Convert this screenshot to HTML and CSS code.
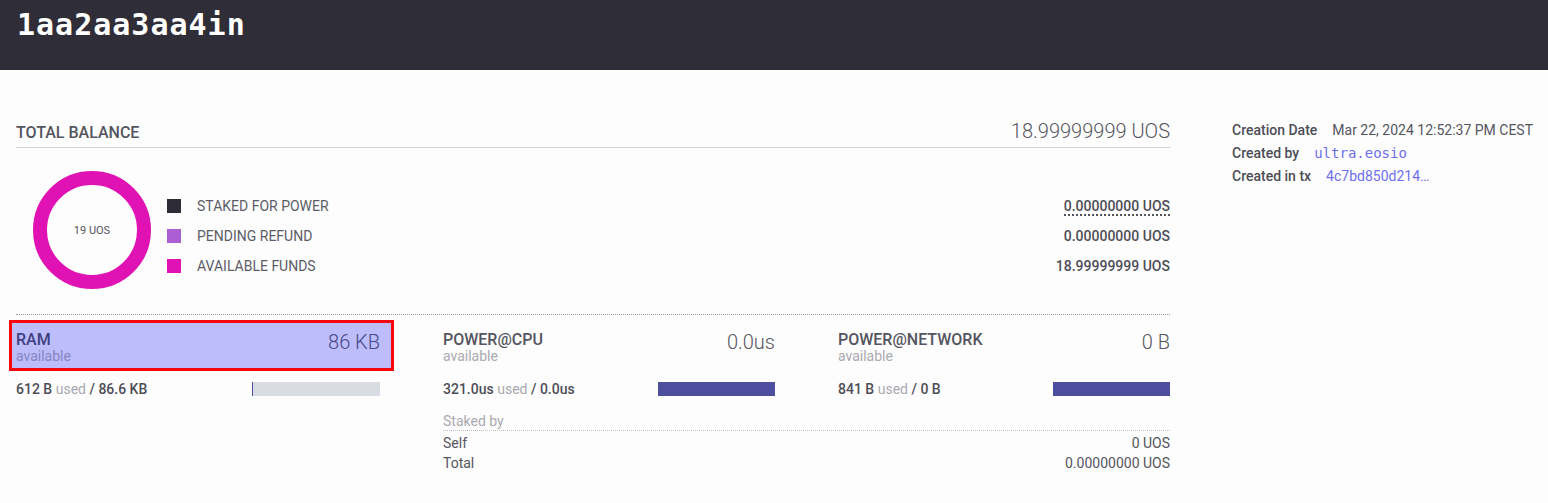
FILE: index.html
```html
<!DOCTYPE html>
<html lang="en">
<head>
<meta charset="utf-8">
<title>1aa2aa3aa4in</title>
<link rel="stylesheet" href="styles.css">
</head>
<body>
<header class="topbar">
  <h1 class="account-name">1aa2aa3aa4in</h1>
</header>
<main class="page">
  <section class="balance">
    <div class="balance-head">
      <h2 class="balance-title">TOTAL BALANCE</h2>
      <span class="balance-total">18.99999999 UOS</span>
    </div>
    <div class="overview">
      <div class="donut">
        <svg class="donut-svg" viewBox="0 0 118 118" width="118" height="118">
          <circle cx="59" cy="59" r="52" fill="none" stroke="#e112b4" stroke-width="14"/>
        </svg>
        <span class="donut-label">19 UOS</span>
      </div>
      <ul class="legend">
        <li class="legend-row"><i class="swatch swatch-staked"></i><span class="legend-label">STAKED FOR POWER</span><span class="legend-value"><span class="dotted">0.00000000 UOS</span></span></li>
        <li class="legend-row"><i class="swatch swatch-refund"></i><span class="legend-label">PENDING REFUND</span><span class="legend-value">0.00000000 UOS</span></li>
        <li class="legend-row"><i class="swatch swatch-funds"></i><span class="legend-label">AVAILABLE FUNDS</span><span class="legend-value">18.99999999 UOS</span></li>
      </ul>
    </div>
    <div class="resources">
      <div class="res">
        <div class="res-head hl">
          <div class="res-names">
            <div class="res-title">RAM</div>
            <div class="res-sub">available</div>
          </div>
          <div class="res-amount">86 KB</div>
        </div>
        <div class="res-usage">
          <span class="usage-text"><b>612 B</b> <span class="muted">used</span> <b>/ 86.6 KB</b></span>
          <span class="bar"><span class="bar-fill" style="width:0.7%"></span></span>
        </div>
      </div>
      <div class="res">
        <div class="res-head">
          <div class="res-names">
            <div class="res-title">POWER@CPU</div>
            <div class="res-sub">available</div>
          </div>
          <div class="res-amount">0.0us</div>
        </div>
        <div class="res-usage">
          <span class="usage-text"><b>321.0us</b> <span class="muted">used</span> <b>/ 0.0us</b></span>
          <span class="bar"><span class="bar-fill" style="width:100%"></span></span>
        </div>
      </div>
      <div class="res">
        <div class="res-head">
          <div class="res-names">
            <div class="res-title">POWER@NETWORK</div>
            <div class="res-sub">available</div>
          </div>
          <div class="res-amount">0 B</div>
        </div>
        <div class="res-usage">
          <span class="usage-text"><b>841 B</b> <span class="muted">used</span> <b>/ 0 B</b></span>
          <span class="bar"><span class="bar-fill" style="width:100%"></span></span>
        </div>
      </div>
      <div class="staked">
        <div class="staked-head">Staked by</div>
        <div class="staked-row"><span>Self</span><span>0 UOS</span></div>
        <div class="staked-row"><span>Total</span><span>0.00000000 UOS</span></div>
      </div>
    </div>
  </section>
  <aside class="meta">
    <div class="meta-row"><span class="meta-label">Creation Date</span><span class="meta-value">Mar 22, 2024 12:52:37 PM CEST</span></div>
    <div class="meta-row"><span class="meta-label">Created by</span><a class="meta-link mono" href="#">ultra.eosio</a></div>
    <div class="meta-row"><span class="meta-label">Created in tx</span><a class="meta-link" href="#">4c7bd850d214…</a></div>
  </aside>
</main>
</body>
</html>
```
FILE: styles.css
```css
* { box-sizing: border-box; }

html, body {
  margin: 0;
  padding: 0;
  background: #fdfdfd;
  font-family: Roboto, "Noto Sans", "Liberation Sans", sans-serif;
  color: #55555f;
  font-size: 14px;
}

.topbar {
  height: 70px;
  background: #2f2d37;
  padding: 4px 0 0 17px;
}

.account-name {
  margin: 0;
  font-family: "DejaVu Sans Mono", "Liberation Mono", monospace;
  font-weight: bold;
  font-size: 30px;
  letter-spacing: 1px;
  line-height: 41px;
  color: #ffffff;
}

.page {
  display: flex;
  align-items: flex-start;
  gap: 62px;
  padding: 49px 16px 0 16px;
}

.balance {
  width: 1154px;
  flex: none;
}

.balance-head {
  display: flex;
  justify-content: space-between;
  align-items: baseline;
  padding-bottom: 4px;
  border-bottom: 1px solid #d4d4dc;
}

.balance-title {
  margin: 0;
  font-size: 16px;
  font-weight: 500;
  line-height: 20px;
  color: #55555f;
}

.balance-total {
  font-size: 20px;
  font-weight: 300;
  line-height: 24px;
  color: #55555f;
}

.overview {
  display: flex;
  align-items: flex-start;
  padding: 23px 0 25px 0;
  border-bottom: 1px dotted #9a9aa2;
}

.donut {
  position: relative;
  width: 118px;
  height: 118px;
  margin-left: 17px;
  flex: none;
}

.donut-svg { display: block; }

.donut-label {
  position: absolute;
  inset: 0;
  display: flex;
  align-items: center;
  justify-content: center;
  font-size: 11px;
  color: #55555f;
}

.legend {
  list-style: none;
  margin: 20px 0 0 16px;
  padding: 0;
  flex: 1;
}

.legend-row {
  display: flex;
  align-items: center;
  height: 30px;
  line-height: 30px;
}

.swatch {
  width: 14px;
  height: 14px;
  flex: none;
  margin-right: 16px;
}
.swatch-staked { background: #2e2c36; }
.swatch-refund { background: #ab5fd3; }
.swatch-funds { background: #e112b4; }

.legend-label {
  font-size: 14px;
  color: #5c5c67;
  flex: 1;
}

.legend-value {
  font-size: 14px;
  font-weight: 500;
  color: #4d4d57;
}

.dotted {
  border-bottom: 2px dotted #55555f;
}

.resources {
  display: grid;
  grid-template-columns: 364px 332px 332px;
  column-gap: 63px;
  row-gap: 13px;
  margin-top: 5px;
}

.res-head {
  display: flex;
  justify-content: space-between;
  align-items: flex-start;
  padding: 11px 0 7px 0;
}

.res-head.hl {
  margin: 0 -14px 0 -7px;
  padding: 8px 11px 4px 4px;
  border: 3px solid #f8070f;
  background: #bdbdfb;
}

.res-title {
  font-size: 16px;
  font-weight: 500;
  line-height: 17px;
  color: #55555f;
}

.res-sub {
  font-size: 14px;
  line-height: 16px;
  color: #a9a9b1;
}

.res-amount {
  font-size: 20px;
  font-weight: 300;
  line-height: 24px;
  margin-top: -1px;
  color: #55555f;
}

.hl .res-title { color: #40407f; }
.hl .res-sub { color: #8585c2; }
.hl .res-amount { color: #48488a; }

.res-usage {
  display: flex;
  justify-content: space-between;
  align-items: center;
  height: 20px;
  margin-top: 8px;
}

.usage-text {
  font-size: 14px;
  line-height: 20px;
  color: #4d4d57;
}

.usage-text b { font-weight: 500; }

.muted {
  color: #a9a9b1;
  font-weight: 400;
}

.bar {
  display: block;
  width: 35.3%;
  height: 14px;
  background: #d9dce3;
}

.bar-fill {
  display: block;
  height: 100%;
  min-width: 1px;
  background: #4e4e9f;
}

.staked {
  grid-column: 2 / 4;
}

.staked-head {
  font-size: 14px;
  line-height: 18px;
  color: #a9a9b1;
  border-bottom: 1px dotted #bdbdc4;
  margin-bottom: 2px;
}

.staked-row {
  display: flex;
  justify-content: space-between;
  font-size: 14px;
  line-height: 20px;
  color: #55555f;
}

.meta {
  flex: none;
}

.meta-row {
  display: flex;
  gap: 15px;
  line-height: 23px;
  font-size: 14px;
  white-space: nowrap;
}

.meta-label {
  font-weight: 500;
  color: #4d4d57;
}

.meta-value { color: #55555f; }

.meta-link {
  color: #6f6fee;
  text-decoration: none;
}

.meta-link.mono {
  font-family: "DejaVu Sans Mono", "Liberation Mono", monospace;
  font-size: 14px;
}
```
